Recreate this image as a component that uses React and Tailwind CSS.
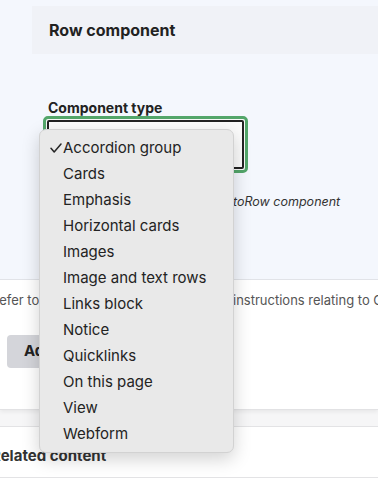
const options = [
  'Accordion group',
  'Cards',
  'Emphasis',
  'Horizontal cards',
  'Images',
  'Image and text rows',
  'Links block',
  'Notice',
  'Quicklinks',
  'On this page',
  'View',
  'Webform',
];

const SelectMenu = ({ selected }) => (
  <div className="absolute left-[39px] top-[129px] w-[195px] h-[324px] pt-[5px] bg-[#e9e9e9] border border-[#d2d2d2] rounded-[7px] shadow-[0_6px_18px_rgba(0,0,0,0.18)]">
    {options.map((opt) => (
      <div key={opt} className="flex items-center h-[26px] text-[15px] text-[#232323]">
        <span className="w-[23px] pl-[10px] flex items-center">
          {opt === selected && (
            <svg width="12" height="10" viewBox="0 0 12 10" fill="none">
              <path d="M1 5.2 L4.2 9 L11 1" stroke="#262626" strokeWidth="1.5" strokeLinecap="round" strokeLinejoin="round" />
            </svg>
          )}
        </span>
        <span>{opt}</span>
      </div>
    ))}
  </div>
);

export default function App() {
  return (
    <div className="relative w-[378px] h-[480px] overflow-hidden bg-[#f6f6f7] font-['Inter',sans-serif] text-[#222]">
      <div className="bg-white h-[410px] shadow-[0_2px_4px_rgba(0,0,0,0.06)] border-b border-[#e2e2e4]">
        {/* paragraph edit area */}
        <div className="bg-[#f4f7fd] h-[280px] pt-[6px] border-b border-[#e1e3e8]">
          <div className="ml-[32px] h-[48px] bg-[#f0f2f7] flex items-center pl-[17px] text-[16px] font-bold">
            Row component
          </div>
          <label className="block ml-[48px] mt-[45px] h-[17px] text-[14px] leading-[17px] font-bold">
            Component type
          </label>
          <div className="ml-[43px] w-[205px] h-[57px] border-[3px] border-[#53a66a] rounded-[5px] p-[1px] bg-[#f8f8f8]">
            <div className="w-full h-full border-2 border-[#222] rounded-[2px] bg-[#fbfbfb]" />
          </div>
          <div className="flex ml-[48px] mt-[21px] text-[12.5px] italic text-[#333] leading-[16px] whitespace-nowrap">
            <span className="shrink-0 w-[185px] overflow-hidden flex justify-end">
              <span className="shrink-0">Select the type of component to add</span>
            </span>
            <span className="shrink-0">to</span>
            <span className="shrink-0">Row component</span>
          </div>
        </div>

        <div className="flex -ml-[9px] mt-[11px] text-[13px] text-[#555] whitespace-nowrap leading-[18px]">
          <span className="shrink-0 w-[242px] overflow-hidden">Refer to the editor guide for the detailed </span>
          <span className="shrink-0">instructions relating to Components</span>
        </div>

        <button className="ml-[7px] mt-[26px] h-[33px] px-[17px] bg-[#d4d5da] rounded-[4px] text-[15px] font-bold text-[#222]">
          Add Row component
        </button>
      </div>

      <div className="mt-[16px] bg-white border-t border-[#e3e3e5] h-[60px]">
        <div className="-ml-[9px] pt-[20px] text-[15px] font-bold leading-[18px] text-[#333] border-b border-[#e3e3e5] pb-[12px]">
          Related content
        </div>
      </div>

      <SelectMenu selected="Accordion group" />
    </div>
  );
}
